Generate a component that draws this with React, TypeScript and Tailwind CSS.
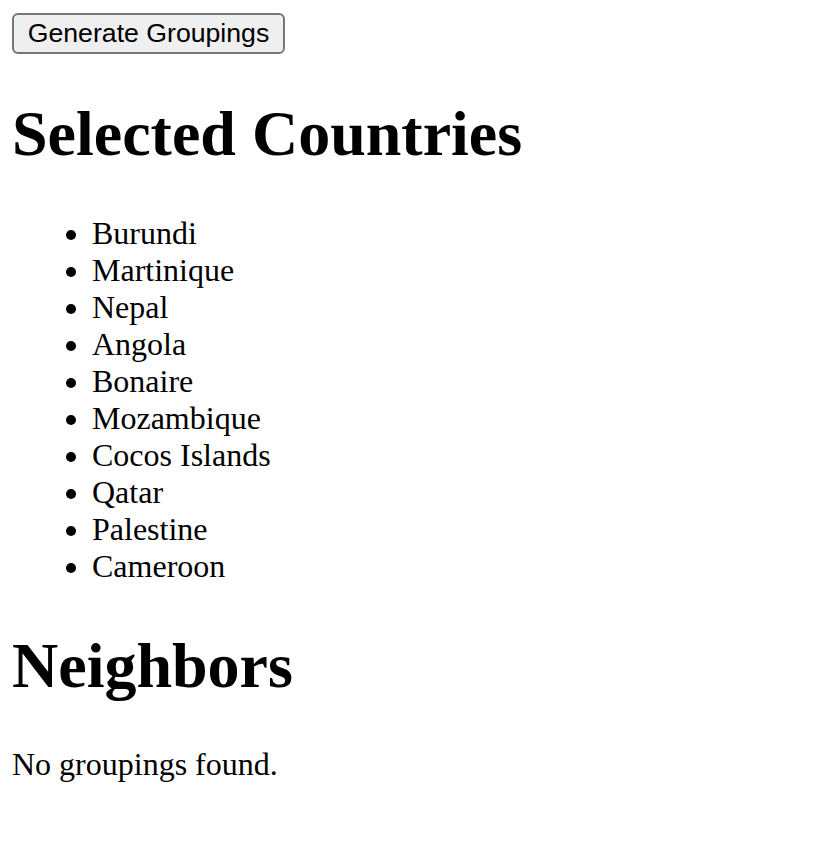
const countries = [
  'Burundi',
  'Martinique',
  'Nepal',
  'Angola',
  'Bonaire',
  'Mozambique',
  'Cocos Islands',
  'Qatar',
  'Palestine',
  'Cameroon',
];

export default function App() {
  return (
    <div className="min-h-screen bg-white p-[12px] text-black font-['Liberation_Serif',serif] text-[32px] leading-[37px]">
      <div className="h-[43px] pt-px">
        <button className="h-[41px] w-[273px] rounded-[6px] border-2 border-[#767676] bg-[#efefef] font-['Liberation_Sans',Arial,sans-serif] text-[26.67px] leading-none text-black">
          Generate Groupings
        </button>
      </div>

      <h1 className="mt-[42px] mb-[44px] text-[64px] font-bold leading-[73.6px]">Selected Countries</h1>
      <ul className="list-disc pl-[80px]">
        {countries.map((c) => (
          <li key={c}>{c}</li>
        ))}
      </ul>

      <h2 className="my-[44px] text-[64px] font-bold leading-[73.6px]">Neighbors</h2>
      <p>No groupings found.</p>
    </div>
  );
}
